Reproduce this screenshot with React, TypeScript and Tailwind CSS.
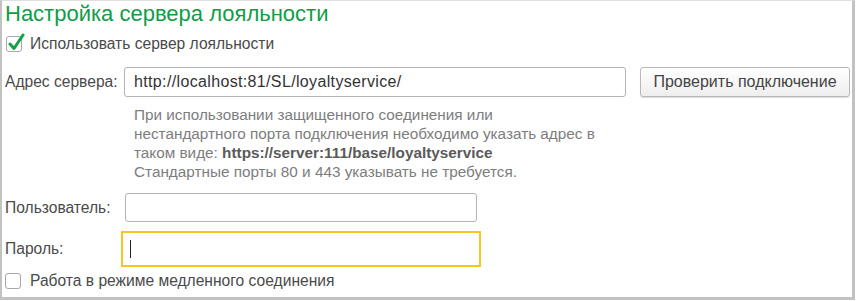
import { useState } from 'react';

function CheckBox({ checked }: { checked: boolean }) {
  return (
    <span className="relative inline-block w-[16px] h-[16px] shrink-0 rounded-[3px] border border-[#a8a8a8] bg-white">
      {checked ? (
        <svg className="absolute left-[1px] top-[-4px]" width="17" height="19" viewBox="0 0 17 19">
          <path d="M2 11 L6 15.5 L15 2" fill="none" stroke="#14a045" strokeWidth="3" strokeLinecap="round" strokeLinejoin="round" />
        </svg>
      ) : null}
    </span>
  );
}

export default function App() {
  const [server, setServer] = useState('http://localhost:81/SL/loyaltyservice/');
  const [user, setUser] = useState('');
  const [pass, setPass] = useState('');

  return (
    <div className="w-[857px] h-[301px] bg-white" style={{ fontFamily: '"Liberation Sans", Arial, sans-serif' }}>
      <div className="w-[855px] h-[300px] border-l-2 border-r-[3px] border-b-[3px] border-t border-l-[#c2c2c2] border-r-[#c2c2c2] border-b-[#c2c2c2] border-t-[#e0e0e0] text-[15.6px] text-[#4a4a4a]">
        <div className="h-[26px] pl-[3px] text-[22px] leading-[25px] text-[#0f9d48]">Настройка сервера лояльности</div>

        <label className="flex items-center h-[34px] pl-[4px] gap-[8px]">
          <CheckBox checked />
          <span>Использовать сервер лояльности</span>
        </label>

        <div className="flex items-center h-[30px] mt-[6px]">
          <span className="w-[122px] pl-[3px]">Адрес сервера:</span>
          <input
            value={server}
            onChange={(e) => setServer(e.target.value)}
            className="w-[502px] h-[30px] rounded-[3px] border border-[#b3b3b3] px-[9px] text-[16px] tracking-[0.35px] text-[#333] outline-none"
          />
          <button className="ml-[14px] w-[210px] h-[30px] rounded-[3px] border border-[#b8b8b8] bg-gradient-to-b from-white to-[#eeeeee] shadow-[0_1px_1px_rgba(0,0,0,0.15)] text-[16px] text-[#444]">
            Проверить подключение
          </button>
        </div>

        <div className="pl-[132px] pt-[8px] h-[95px] leading-[19px] text-[15.3px] text-[#7d7d7d]">
          <div>При использовании защищенного соединения или</div>
          <div>нестандартного порта подключения необходимо указать адрес в</div>
          <div>
            таком виде: <b className="text-[#5a5a5a]">https://server:111/base/loyaltyservice</b>
          </div>
          <div>Стандартные порты 80 и 443 указывать не требуется.</div>
        </div>

        <div className="flex items-center h-[29px] mt-[1px]">
          <span className="w-[123px] pl-[3px]">Пользователь:</span>
          <input
            value={user}
            onChange={(e) => setUser(e.target.value)}
            className="w-[352px] h-[29px] rounded-[3px] border border-[#b3b3b3] px-[8px] text-[15px] outline-none"
          />
        </div>

        <div className="flex items-center h-[36px] mt-[9px]">
          <span className="w-[119px] pl-[3px]">Пароль:</span>
          <div className="flex items-center w-[360px] h-[36px] border-2 border-[#f7c51e] pl-[7px]">
            <input
              type="password"
              value={pass}
              onChange={(e) => setPass(e.target.value)}
              className="w-[1px] h-[18px] bg-[#222] outline-none"
            />
          </div>
        </div>

        <label className="flex items-center h-[26px] mt-[1px] pl-[3px] gap-[9px]">
          <CheckBox checked={false} />
          <span>Работа в режиме медленного соединения</span>
        </label>
      </div>
    </div>
  );
}
